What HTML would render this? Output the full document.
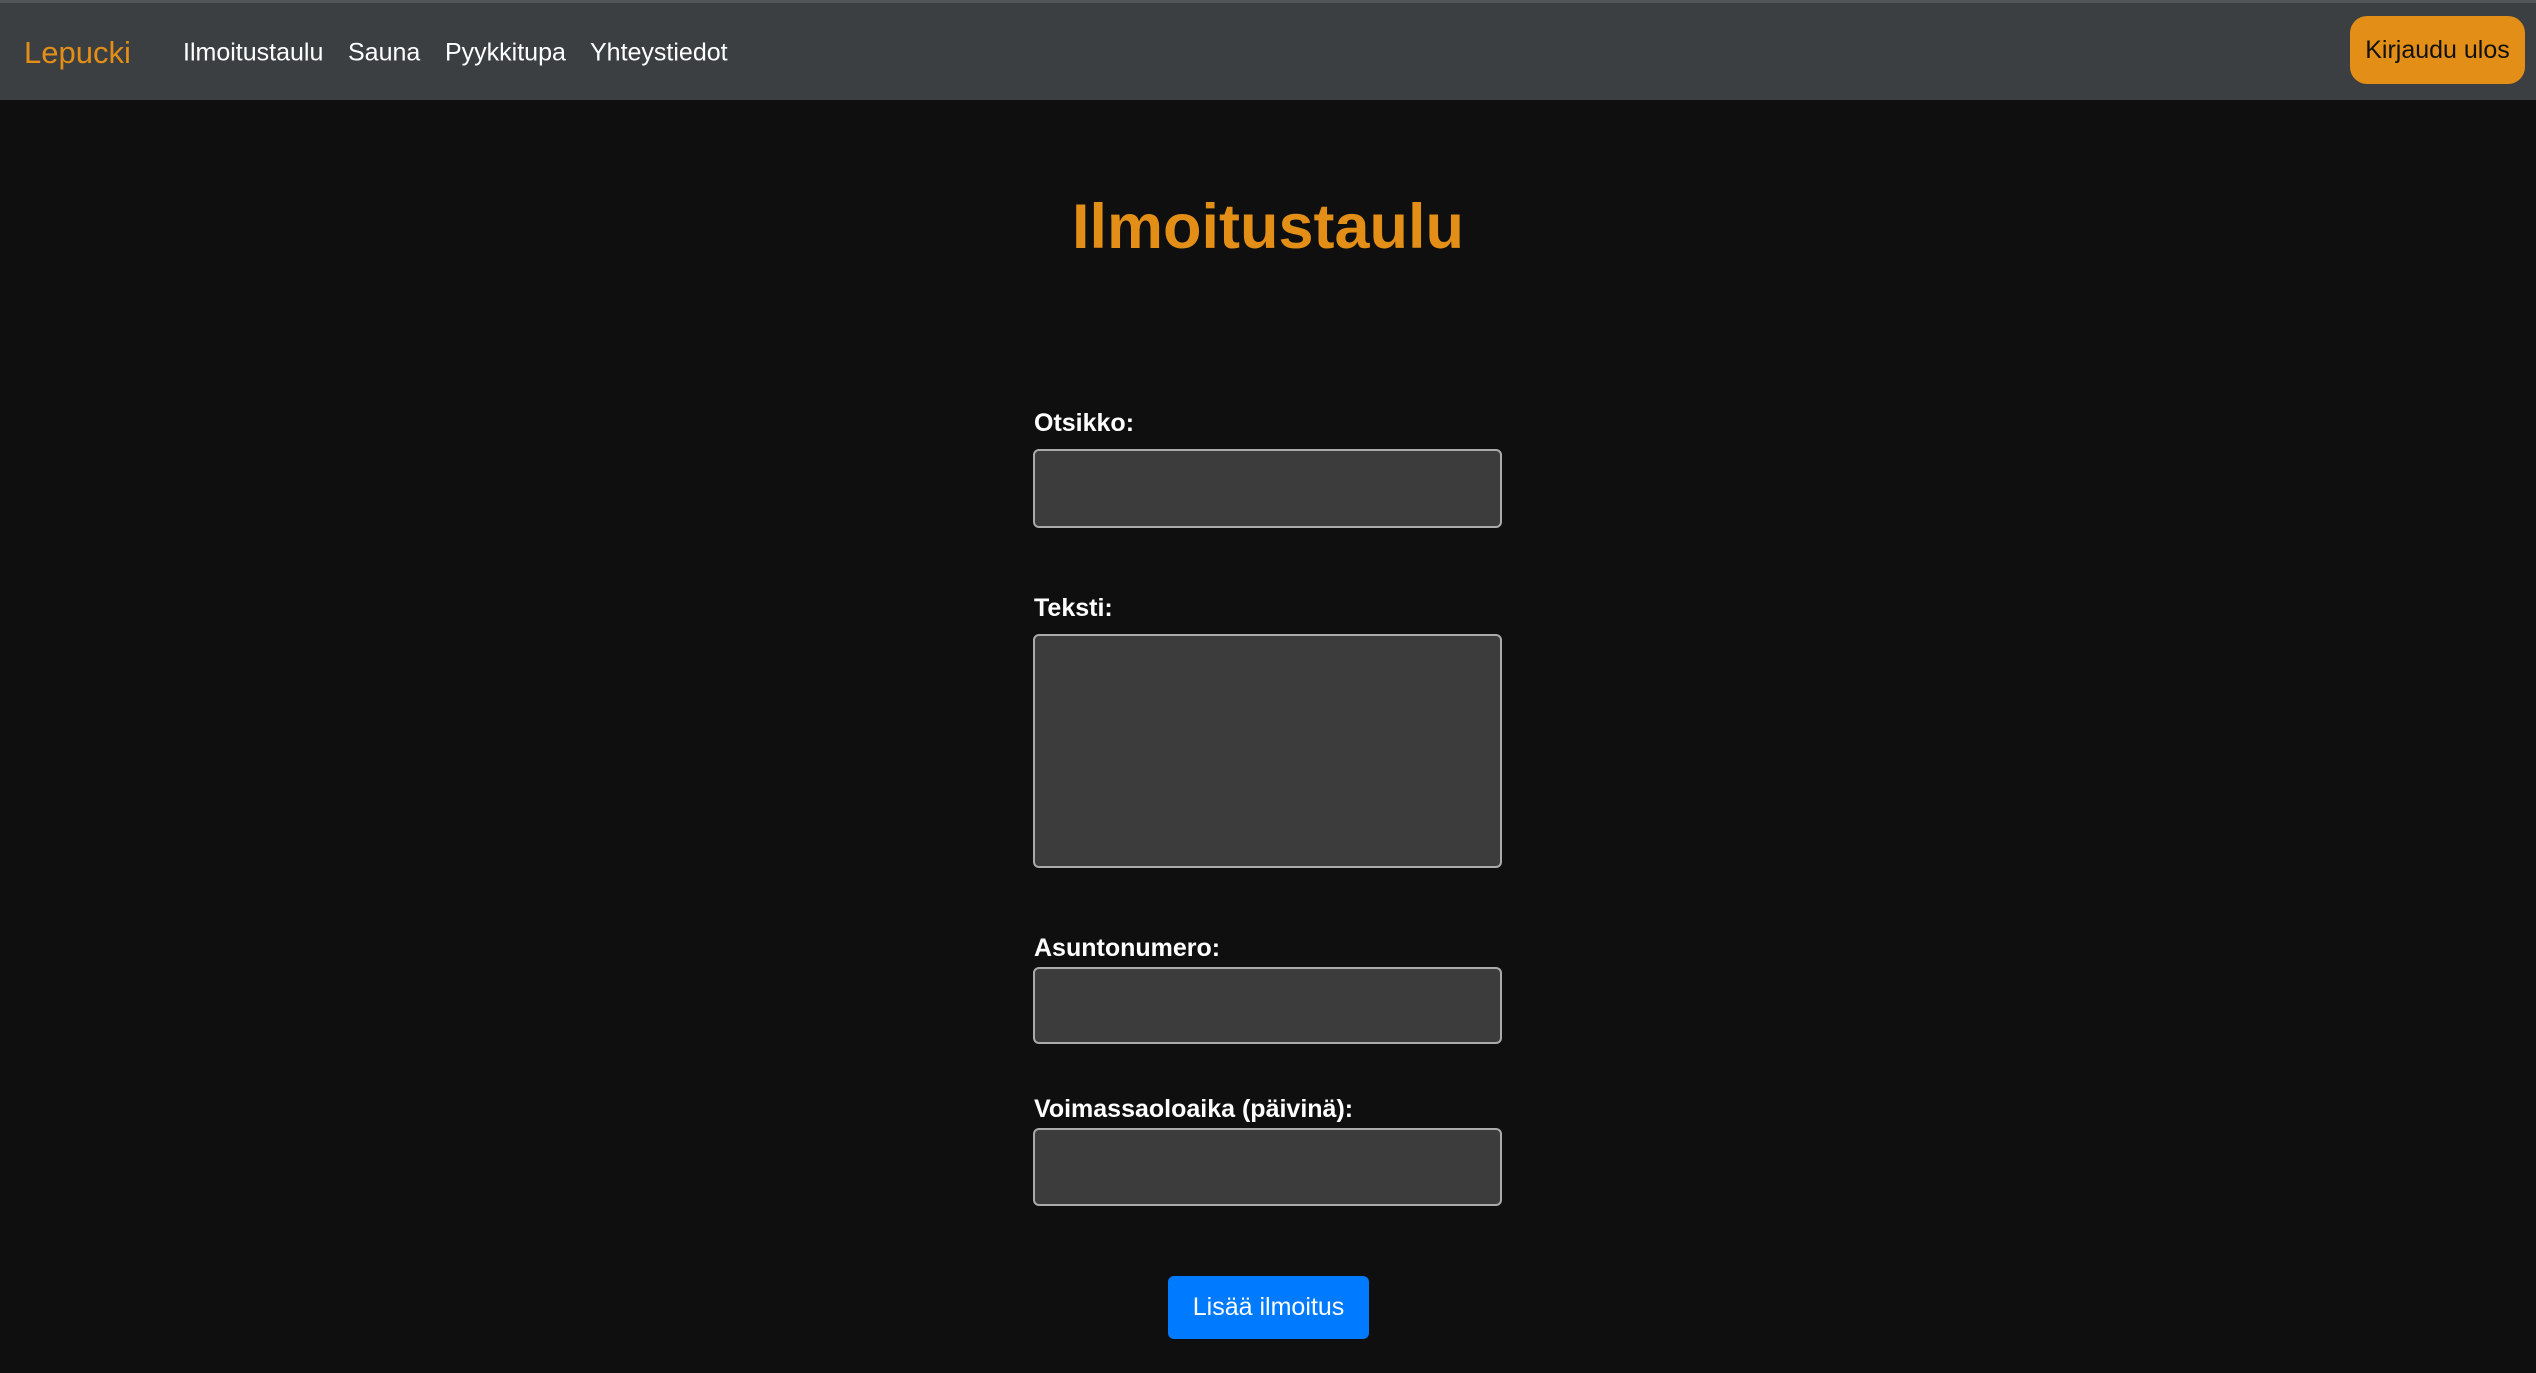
<!DOCTYPE html>
<html><head><meta charset="utf-8"><style>
html,body{margin:0;padding:0;width:2536px;height:1373px;background:#0f0f0f;overflow:hidden;font-family:"Liberation Sans",Arial,sans-serif}
.nav{position:absolute;left:0;top:0;width:2536px;height:100px;background:#3b3f42;border-top:3px solid #555;box-sizing:border-box}
.a{position:absolute;top:50px;transform:translateY(-50%);color:#fff;font-size:25px;white-space:nowrap}
.logo{color:#e28e17;font-size:31px;left:24px}
.out{position:absolute;left:2350px;top:13px;width:175px;height:68px;background:#e28e17;border-radius:17px;color:#111;font-size:25px;line-height:68px;text-align:center}
h1{position:absolute;left:0;width:2536px;text-align:center;top:191px;margin:0;color:#e28e17;font-size:63px;font-weight:bold}
.l{position:absolute;left:1034px;color:#fff;font-weight:bold;font-size:25px;white-space:nowrap}
.f{position:absolute;left:1033px;width:469px;background:#3c3c3c;border:2px solid #aaa;border-radius:6px;box-sizing:border-box}
.btn{position:absolute;left:1168px;top:1276px;width:201px;height:63px;background:#007bff;border-radius:6px;color:#fff;font-size:25px;line-height:63px;text-align:center}
</style></head><body>
<div class="nav">
<span class="a logo">Lepucki</span>
<span class="a" style="left:183px">Ilmoitustaulu</span>
<span class="a" style="left:348px">Sauna</span>
<span class="a" style="left:445px">Pyykkitupa</span>
<span class="a" style="left:590px">Yhteystiedot</span>
<div class="out">Kirjaudu ulos</div>
</div>
<h1>Ilmoitustaulu</h1>
<div class="l" style="top:409px">Otsikko:</div>
<div class="f" style="top:449px;height:79px"></div>
<div class="l" style="top:594px">Teksti:</div>
<div class="f" style="top:634px;height:234px"></div>
<div class="l" style="top:934px">Asuntonumero:</div>
<div class="f" style="top:967px;height:77px"></div>
<div class="l" style="top:1095px">Voimassaoloaika (päivinä):</div>
<div class="f" style="top:1128px;height:78px"></div>
<div class="btn">Lisää ilmoitus</div>
</body></html>
